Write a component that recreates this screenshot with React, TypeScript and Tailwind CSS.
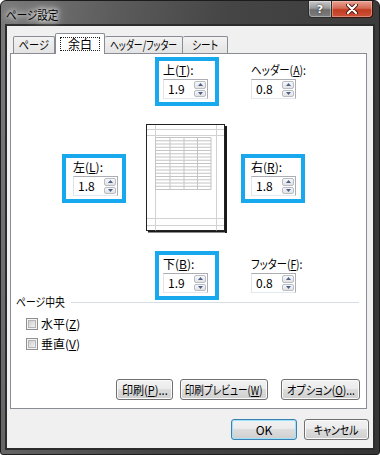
import React from "react";

const FONT =
  "font-['Noto_Sans_CJK_JP','Noto_Sans',sans-serif] [font-feature-settings:'palt']";

function Arrow({ up }: { up: boolean }) {
  return (
    <svg width="5" height="3" viewBox="0 0 5 3">
      <path d={up ? "M0 3 L2.5 0 L5 3Z" : "M0 0 L2.5 3 L5 0Z"} fill="#4b5f8e" />
    </svg>
  );
}

function Spin({ v }: { v: string }) {
  return (
    <div className="flex h-[20px] w-[45px] border border-[#abadb3] border-b-[#e3e9ef] border-l-[#e2e3ea] bg-white">
      <div className="flex-1 pl-[4px] text-[12px] leading-[18px] text-black">{v}</div>
      <div className="flex w-[13px] flex-col gap-px py-px pr-px">
        <div className="flex flex-1 items-center justify-center rounded-[2px] border border-[#b9bcc4] bg-[linear-gradient(#f7f7f7,#e2e2e2)]">
          <Arrow up />
        </div>
        <div className="flex flex-1 items-center justify-center rounded-[2px] border border-[#b9bcc4] bg-[linear-gradient(#f7f7f7,#e2e2e2)]">
          <Arrow up={false} />
        </div>
      </div>
    </div>
  );
}

function U({ children }: { children: React.ReactNode }) {
  return <span className="underline underline-offset-[1px]">{children}</span>;
}

function Box({
  label,
  v,
  pl,
  hl,
}: {
  label: React.ReactNode;
  v: string;
  pl: string;
  hl: boolean;
}) {
  return (
    <div
      className={`h-[49px] w-[64px] border-4 pt-[1px] ${pl} ${
        hl ? "border-[#18a8ee]" : "border-transparent"
      }`}
    >
      <div className="h-[16px] whitespace-nowrap text-[12px] leading-[16px] text-black">
        {label}
      </div>
      <div className="mt-[1px]">
        <Spin v={v} />
      </div>
    </div>
  );
}

function Page() {
  const rows = [];
  for (let i = 0; i <= 16; i++) {
    const y = 13.5 + i * 3.25;
    rows.push(
      <line key={"r" + i} x1="9" x2="65" y1={y} y2={y} stroke="#c4c4c4" strokeWidth="1" />
    );
  }
  const cols = [9.5, 24, 38, 51.5, 65];
  return (
    <svg width="81" height="109" viewBox="0 0 81 109">
      <rect x="0.5" y="0.5" width="78" height="106" fill="#fff" stroke="#222" />
      <rect x="79" y="2" width="2" height="107" fill="#1a1a1a" />
      <rect x="2" y="107" width="79" height="1.5" fill="#1a1a1a" />
      <line x1="9.5" x2="9.5" y1="1" y2="106.5" stroke="#d2d2d2" />
      <line x1="70.5" x2="70.5" y1="1" y2="106.5" stroke="#d2d2d2" />
      <line x1="1" x2="78" y1="5.5" y2="5.5" stroke="#d2d2d2" />
      <line x1="1" x2="78" y1="11.5" y2="11.5" stroke="#d2d2d2" />
      <line x1="1" x2="78" y1="94.5" y2="94.5" stroke="#d2d2d2" />
      <line x1="1" x2="78" y1="101.5" y2="101.5" stroke="#d2d2d2" />
      {rows}
      {cols.map((x, i) => (
        <line key={"c" + i} x1={x} x2={x} y1="13.5" y2="65.5" stroke="#c4c4c4" />
      ))}
    </svg>
  );
}

function Check({ label }: { label: React.ReactNode }) {
  return (
    <div className="flex h-[14px] items-center gap-[3px]">
      <div className="h-[12px] w-[12px] border border-[#8e8f8f] bg-[#f4f4f4] p-[1px]">
        <div className="h-full w-full border border-[#b4b4b4] bg-[linear-gradient(135deg,#cfcfcf,#f2f2f2)]" />
      </div>
      <div className="whitespace-nowrap text-[12px] leading-[14px] text-black">{label}</div>
    </div>
  );
}

function Btn({
  children,
  w,
  def,
}: {
  children: React.ReactNode;
  w: string;
  def?: boolean;
}) {
  return (
    <div
      className={`flex h-[21px] items-center justify-center whitespace-nowrap rounded-[3px] border text-[12px] leading-[14px] text-black bg-[linear-gradient(#f2f2f2_0%,#ebebeb_45%,#dddddd_50%,#cfcfcf_100%)] ${w} ${
        def
          ? "border-[#3c7fb1] shadow-[inset_0_0_0_1px_#9fe0fb]"
          : "border-[#707070] shadow-[inset_0_0_0_1px_#fbfbfb]"
      }`}
    >
      {children}
    </div>
  );
}

export default function App() {
  return (
    <div className={`h-[455px] w-[380px] bg-white ${FONT}`}>
      <div className="flex h-[455px] w-[380px] flex-col rounded-t-[6px] rounded-b-[3px] border border-[#1c1c1c] bg-[linear-gradient(100deg,#7a7a7a_0%,#5c5c5c_25%,#454545_50%,#3e3e3e_75%,#353535_100%)] px-[4px] pb-[4px]">
        {/* title bar */}
        <div className="flex h-[23px] items-start justify-between">
          <div className="pl-[1px] pt-[6px] text-[12px] leading-[16px] text-black [text-shadow:0_0_5px_#fff,0_0_8px_#fff,0_0_12px_#ddd]">
            <span className="inline-block origin-left scale-x-[0.88] whitespace-nowrap">
              ページ設定
            </span>
          </div>
          <div className="flex pr-[2px]">
            <div className="flex h-[17px] w-[24px] items-center justify-center rounded-bl-[4px] border border-t-0 border-[#2c2c2c] bg-[linear-gradient(#c9c9c9_0%,#9a9a9a_45%,#6d6d6d_55%,#7d7d7d_100%)] shadow-[inset_0_0_0_1px_rgba(255,255,255,0.35)]">
              <span className="font-['DejaVu_Sans',sans-serif] text-[11px] font-bold leading-none text-white [text-shadow:0_0_2px_#000]">
                ?
              </span>
            </div>
            <div className="flex h-[17px] w-[41px] items-center justify-center rounded-br-[4px] border border-l-0 border-t-0 border-[#3b120c] bg-[linear-gradient(#e8a393_0%,#d46a55_45%,#c23c21_55%,#c9543a_100%)] shadow-[inset_0_0_0_1px_rgba(255,220,210,0.4)]">
              <svg width="12" height="10" viewBox="0 0 12 10">
                <path d="M2 1 L10 9 M10 1 L2 9" stroke="#4a160d" strokeWidth="4" strokeLinecap="round" />
                <path d="M2 1 L10 9 M10 1 L2 9" stroke="#fff" strokeWidth="2.2" strokeLinecap="round" />
              </svg>
            </div>
          </div>
        </div>

        {/* client */}
        <div className="flex flex-1 flex-col border-2 border-[#2c2c2c] bg-[#f0f0f0] pl-[3px] pr-[6px] pt-[7px]">
          {/* tabs */}
          <div className="flex h-[20px] items-end pl-[3px]">
            <div className="flex h-[17px] w-[42px] items-center justify-center whitespace-nowrap rounded-t-[2px] border border-b-0 border-[#898c95] bg-[linear-gradient(#f3f3f3,#e3e3e3)] text-[12px] leading-[14px]">
              <span className="inline-block scale-x-[0.85]">ページ</span>
            </div>
            <div className="relative z-10 -mb-px flex h-[21px] w-[50px] items-center justify-center rounded-t-[2px] border border-b-0 border-[#898c95] bg-white">
              <span className="border border-dotted border-[#222] px-[7px] text-[12px] leading-[12px]">
                余白
              </span>
            </div>
            <div className="flex h-[17px] w-[78px] items-center justify-center whitespace-nowrap rounded-t-[2px] border border-b-0 border-l-0 border-[#898c95] bg-[linear-gradient(#f3f3f3,#e3e3e3)] text-[12px] leading-[14px]">
              <span className="inline-block scale-x-[0.74]">ヘッダー/フッター</span>
            </div>
            <div className="flex h-[17px] w-[45px] items-center justify-center whitespace-nowrap rounded-t-[2px] border border-b-0 border-l-0 border-[#898c95] bg-[linear-gradient(#f3f3f3,#e3e3e3)] text-[12px] leading-[14px]">
              <span className="inline-block scale-x-[0.8]">シート</span>
            </div>
          </div>

          {/* panel */}
          <div className="flex h-[356px] flex-col border border-[#898c95] bg-white">
            {/* row 1 */}
            <div className="ml-[144px] mt-[3px] flex gap-[28px]">
              <Box
                label={
                  <>
                    上(<U>T</U>):
                  </>
                }
                v="1.9"
                pl="pl-[4px]"
                hl
              />
              <Box
                label={
                  <span className="inline-block origin-left scale-x-[0.87]">
                    ヘッダー(<U>A</U>):
                  </span>
                }
                v="0.8"
                pl="pl-0"
                hl={false}
              />
            </div>
            {/* row 2 */}
            <div className="ml-[51px] mt-[18px] flex items-center">
              <Box
                label={
                  <>
                    左(<U>L</U>):
                  </>
                }
                v="1.8"
                pl="pl-[7px]"
                hl
              />
              <div className="ml-[20px]">
                <Page />
              </div>
              <div className="ml-[14px]">
                <Box
                  label={
                    <>
                      右(<U>R</U>):
                    </>
                  }
                  v="1.8"
                  pl="pl-[6px]"
                  hl
                />
              </div>
            </div>
            {/* row 3 */}
            <div className="ml-[144px] mt-[18px] flex gap-[28px]">
              <Box
                label={
                  <>
                    下(<U>B</U>):
                  </>
                }
                v="1.9"
                pl="pl-[4px]"
                hl
              />
              <Box
                label={
                  <span className="inline-block origin-left scale-x-[0.86]">
                    フッター(<U>F</U>):
                  </span>
                }
                v="0.8"
                pl="pl-0"
                hl={false}
              />
            </div>
            {/* group */}
            <div className="mt-[-6px] flex h-[16px] items-center pl-[5px] pr-[7px]">
              <div className="-mr-[10px] whitespace-nowrap text-[12px] leading-[16px] text-black">
                <span className="inline-block origin-left scale-x-[0.82]">ページ中央</span>
              </div>
              <div className="ml-[5px] h-px flex-1 bg-[#d5dfe5]" />
            </div>
            <div className="ml-[15px] mt-[7px]">
              <Check
                label={
                  <>
                    水平(<U>Z</U>)
                  </>
                }
              />
            </div>
            <div className="ml-[15px] mt-[6px]">
              <Check
                label={
                  <>
                    垂直(<U>V</U>)
                  </>
                }
              />
            </div>
            <div className="mt-[28px] flex justify-end pr-[6px]">
              <Btn w="w-[57px]">
                <span className="inline-block scale-x-[0.92]">
                  印刷(<U>P</U>)...
                </span>
              </Btn>
              <div className="ml-[7px]">
                <Btn w="w-[88px]">
                  <span className="inline-block scale-x-[0.8]">
                    印刷プレビュー(<U>W</U>)
                  </span>
                </Btn>
              </div>
              <div className="ml-[13px]">
                <Btn w="w-[79px]">
                  <span className="inline-block scale-x-[0.85]">
                    オプション(<U>O</U>)...
                  </span>
                </Btn>
              </div>
            </div>
          </div>

          {/* bottom buttons */}
          <div className="-mr-[2px] mt-[10px] flex justify-end gap-[7px]">
            <Btn w="w-[66px]" def>
              OK
            </Btn>
            <Btn w="w-[65px]">
              <span className="inline-block scale-x-[0.82]">キャンセル</span>
            </Btn>
          </div>
        </div>
      </div>
    </div>
  );
}
